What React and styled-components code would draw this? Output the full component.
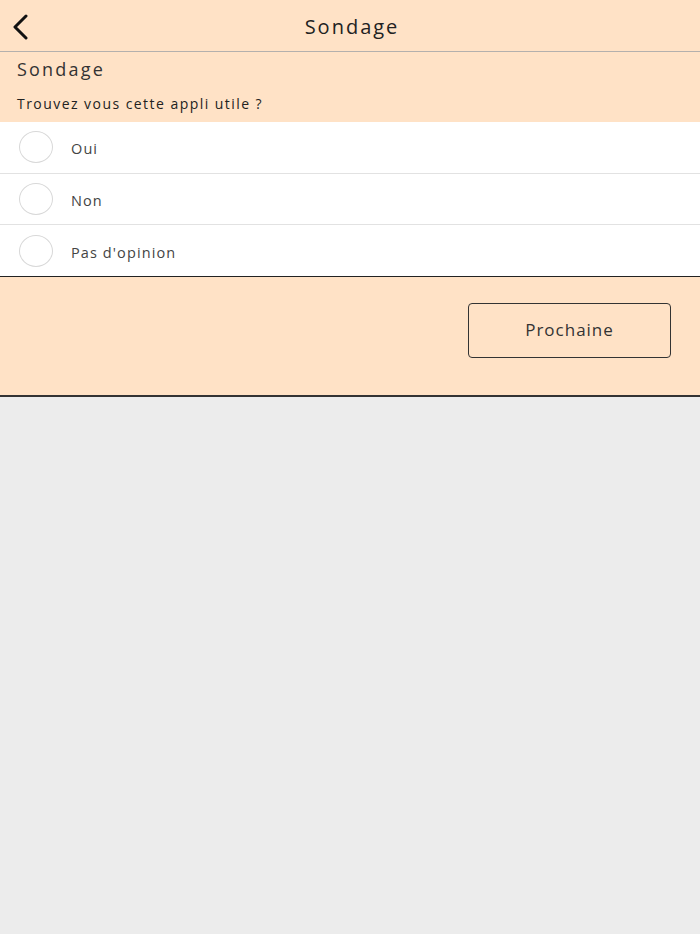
import { useState } from "react";
import styled, { createGlobalStyle } from "styled-components";

const GlobalStyle = createGlobalStyle`
  html, body {
    margin: 0;
    padding: 0;
    background: #ececec;
    font-family: "Open Sans", "Noto Sans", sans-serif;
  }
  * { box-sizing: border-box; }
`;

const options = ["Oui", "Non", "Pas d'opinion"];

const App = () => {
  const [picked, setPicked] = useState(null);

  return (
    <Page>
      <GlobalStyle />
      <Header>
        <BackButton aria-label="Retour">
          <svg width="22" height="26" viewBox="0 0 22 26" fill="none">
            <path
              d="M16 2 L5 13 L16 24"
              stroke="#111"
              strokeWidth="3"
              strokeLinecap="round"
              strokeLinejoin="round"
            />
          </svg>
        </BackButton>
        <HeaderTitle>Sondage</HeaderTitle>
      </Header>
      <Intro>
        <SectionTitle>Sondage</SectionTitle>
        <Question>Trouvez vous cette appli utile ?</Question>
      </Intro>
      <OptionList>
        {options.map((label, i) => (
          <OptionRow key={label} $last={i === options.length - 1} onClick={() => setPicked(i)}>
            <Radio $checked={picked === i} />
            <OptionLabel>{label}</OptionLabel>
          </OptionRow>
        ))}
      </OptionList>
      <Footer>
        <NextButton>Prochaine</NextButton>
      </Footer>
    </Page>
  );
};

const Page = styled.div`
  display: flex;
  flex-direction: column;
  width: 100%;
  min-height: 934px;
  background: #ececec;
`;

const Header = styled.div`
  position: relative;
  display: flex;
  align-items: center;
  justify-content: center;
  height: 52px;
  padding-top: 2px;
  background: #ffe2c6;
  border-bottom: 1px solid #b4b0ad;
`;

const BackButton = styled.button`
  position: absolute;
  left: 10px;
  top: 14px;
  display: flex;
  padding: 0;
  border: none;
  background: none;
  cursor: pointer;
`;

const HeaderTitle = styled.h1`
  margin: 0;
  padding-left: 4px;
  font-size: 20px;
  font-weight: 500;
  letter-spacing: 2px;
  color: #222;
`;

const Intro = styled.div`
  display: flex;
  flex-direction: column;
  gap: 13px;
  height: 70px;
  padding: 5px 17px 0;
  background: #ffe2c6;
`;

const SectionTitle = styled.h2`
  margin: 0;
  font-size: 18px;
  font-weight: 500;
  letter-spacing: 2.2px;
  color: #333;
`;

const Question = styled.p`
  margin: 0;
  font-size: 14px;
  letter-spacing: 1.45px;
  color: #222;
`;

const OptionList = styled.div`
  display: flex;
  flex-direction: column;
  background: #fff;
`;

const OptionRow = styled.div`
  display: flex;
  align-items: center;
  gap: 18px;
  height: ${({ $last }) => ($last ? "52px" : "51.5px")};
  padding: 0 19px;
  border-bottom: ${({ $last }) => ($last ? "1px solid #222" : "1px solid #e2e2e2")};
  cursor: pointer;
`;

const Radio = styled.span`
  width: 34px;
  height: 32px;
  border-radius: 50%;
  border: 1px solid #d8d8d8;
  background: ${({ $checked }) => ($checked ? "#f3b47c" : "#fff")};
`;

const OptionLabel = styled.span`
  padding-top: 3px;
  font-size: 14.5px;
  letter-spacing: 1.1px;
  color: #444;
`;

const Footer = styled.div`
  display: flex;
  justify-content: flex-end;
  align-items: flex-start;
  height: 120px;
  padding: 26px 29px 0 0;
  background: #ffe2c6;
  border-bottom: 2px solid #333;
`;

const NextButton = styled.button`
  width: 203px;
  height: 55px;
  padding-bottom: 4px;
  border: 1.5px solid #333;
  border-radius: 4px;
  background: transparent;
  font-family: "Open Sans", "Noto Sans", sans-serif;
  font-size: 17px;
  letter-spacing: 1px;
  color: #333;
  cursor: pointer;
`;

export default App;
